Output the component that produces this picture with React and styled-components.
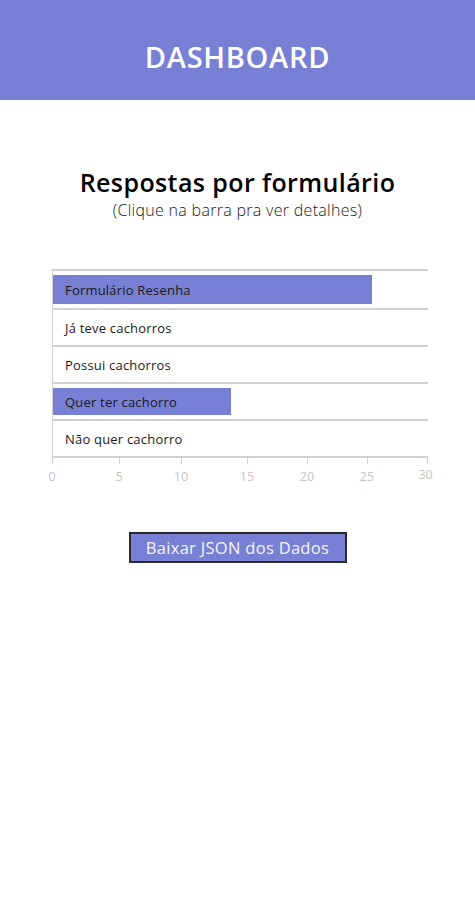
import React from 'react'
import styled, { createGlobalStyle } from 'styled-components'

const GlobalStyle = createGlobalStyle`
  body {
    margin: 0;
    background: #fff;
    font-family: "Open Sans", "Noto Sans", sans-serif;
  }
`

const data = [
  { label: 'Formulário Resenha', value: 25.5 },
  { label: 'Já teve cachorros', value: 0 },
  { label: 'Possui cachorros', value: 0 },
  { label: 'Quer ter cachorro', value: 14.25 },
  { label: 'Não quer cachorro', value: 0 },
]
// tick value + width of the gap up to the next tick
const ticks = [
  { v: 0, w: 67 },
  { v: 5, w: 62 },
  { v: 10, w: 66 },
  { v: 15, w: 60 },
  { v: 20, w: 60 },
  { v: 25, w: 60 },
  { v: 30, w: 0 },
]
const MAX = 30

function App() {
  return (
    <Page>
      <GlobalStyle />
      <Header>
        <HeaderTitle>DASHBOARD</HeaderTitle>
      </Header>
      <Content>
        <Title>Respostas por formulário</Title>
        <Subtitle>(Clique na barra pra ver detalhes)</Subtitle>
        <Chart>
          <Rows>
            {data.map((d, i) => (
              <Row key={d.label} first={i === 0}>
                {d.value > 0 && <Bar style={{ width: `${(d.value / MAX) * 100}%` }} />}
                <RowLabel>{d.label}</RowLabel>
              </Row>
            ))}
          </Rows>
          <Axis>
            {ticks.map(t => (
              <Segment key={t.v} w={t.w}>
                <Tick />
                <TickLabel last={t.v === MAX}>{t.v}</TickLabel>
              </Segment>
            ))}
          </Axis>
        </Chart>
        <DownloadBtn>Baixar JSON dos Dados</DownloadBtn>
      </Content>
    </Page>
  )
}

export default App

const Page = styled.div`
  min-height: 907px;
  background: #fff;
`
const Header = styled.header`
  height: 100px;
  background-color: #7780d4;
  display: flex;
  align-items: center;
  justify-content: center;
`
const HeaderTitle = styled.h1`
  margin: 12px 0 0 0;
  color: #fff;
  font-size: 29px;
  font-weight: 600;
  letter-spacing: 0.7px;
`
const Content = styled.main`
  display: flex;
  flex-direction: column;
  align-items: center;
  padding-top: 66px;
`
const Title = styled.h2`
  margin: 0;
  font-size: 25px;
  font-weight: 600;
  letter-spacing: 0.4px;
  color: #000;
  line-height: 32px;
`
const Subtitle = styled.p`
  margin: 1px 0 0 0;
  font-size: 16px;
  font-weight: 300;
  letter-spacing: 0.3px;
  color: #1a1a1a;
  line-height: 22px;
`
const Chart = styled.div`
  align-self: flex-start;
  margin: 48px 0 0 52px;
  width: 376px;
`
const Rows = styled.div`
  border-left: 1px solid #d0d0d0;
  border-top: 2px solid #d0d0d0;
`
const Row = styled.div`
  position: relative;
  height: ${p => (p.first ? '37px' : '35px')};
  display: flex;
  align-items: center;
  border-bottom: 2px solid #d0d0d0;
`
const Bar = styled.div`
  position: absolute;
  left: 0;
  top: 4px;
  bottom: 4px;
  background: #7780d4;
`
const RowLabel = styled.span`
  position: relative;
  padding-left: 12px;
  font-size: 13px;
  letter-spacing: 0.2px;
  color: #1a1a1a;
`
const Axis = styled.div`
  display: flex;
  height: 28px;
`
const Segment = styled.div`
  position: relative;
  flex: 0 0 ${p => p.w}px;
  height: 6px;
`
const Tick = styled.div`
  width: 1px;
  height: 6px;
  background: #d0d0d0;
`
const TickLabel = styled.span`
  position: absolute;
  top: ${p => (p.last ? '8px' : '10px')};
  left: 0;
  transform: translateX(${p => (p.last ? '-60%' : '-50%')});
  font-size: 12.5px;
  color: #c4c4c4;
`
const DownloadBtn = styled.button`
  margin-top: 46px;
  width: 218px;
  height: 31px;
  background: #7780d4;
  border: 2px solid #2a2a2a;
  color: #f4f4f4;
  font-family: "Open Sans", "Noto Sans", sans-serif;
  font-size: 16.5px;
  letter-spacing: 0.3px;
  cursor: pointer;
  padding: 0;
`
